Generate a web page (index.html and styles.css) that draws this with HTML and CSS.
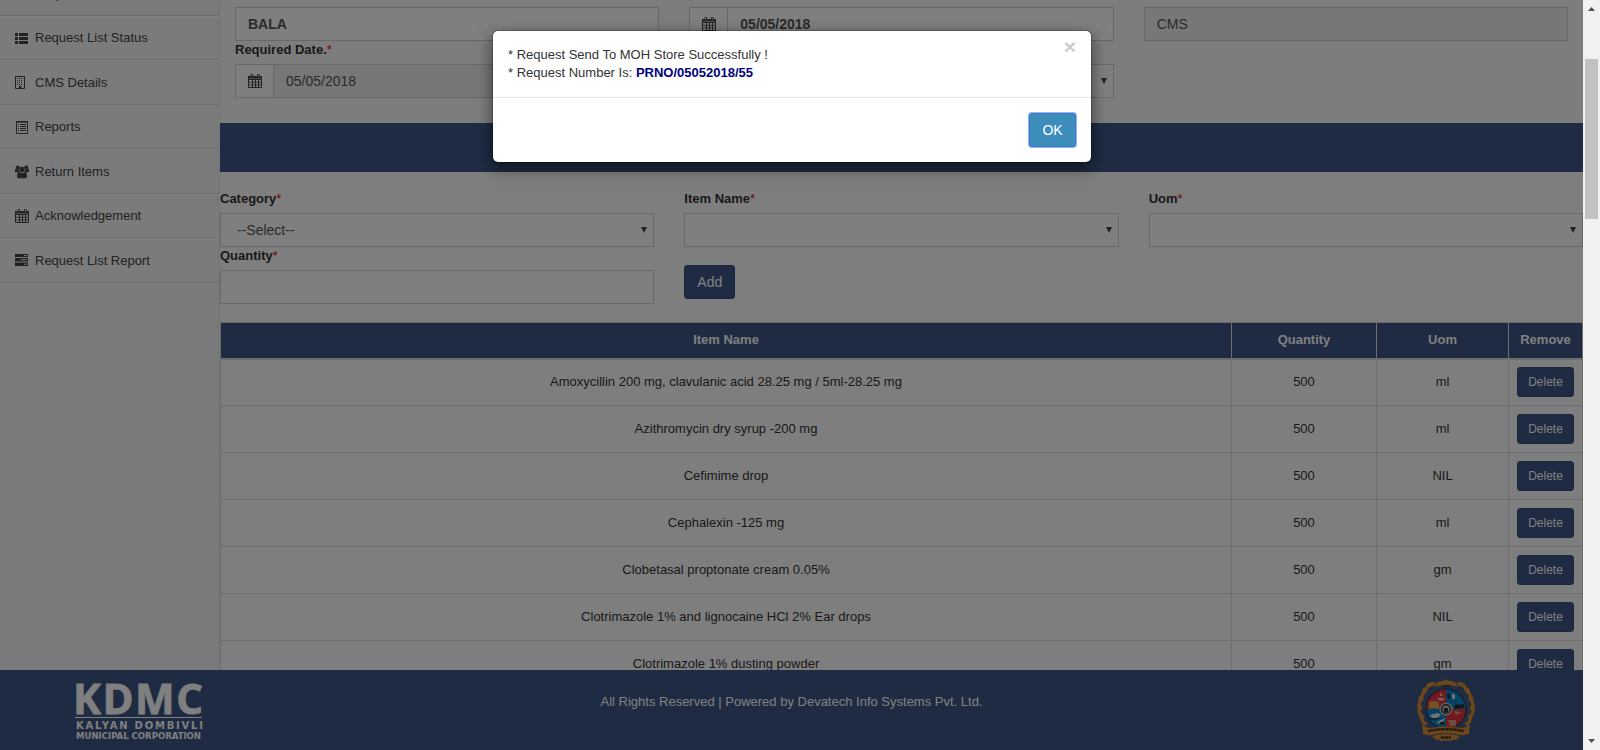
FILE: index.html
```html
<!DOCTYPE html>
<html lang="en">
<head>
<meta charset="utf-8">
<title>Request To MOH Store</title>
<link rel="stylesheet" href="styles.css">
</head>
<body>
<svg class="defs" aria-hidden="true">
  <symbol id="calendar" viewBox="0 0 14 14">
    <path fill="none" stroke="currentColor" d="M.5 2.5h13v11H.5zM.5 5.5h13M4.500 5v8M7.500 5v8M10.500 5v8"/>
    <path stroke="currentColor" stroke-width=".8" d="M.5 8.300h13M.5 10.900h13"/>
    <path fill="currentColor" d="M0 2h14v2.600H0zM2.500.2h2.600v3.300H2.500zM9 .2h2.600v3.300H9z"/>
    <path stroke="#eee" stroke-width=".8" d="M3.800 1v2M10.300 1v2"/>
  </symbol>
</svg>
<div class="window">
  <div class="page">
    <nav class="sidebar">
      <a class="item first">Request</a>
      <a class="item"><svg class="ico" viewBox="0 0 14 14"><path fill="currentColor" d="M0 1h3v3H0zM4 1h9v3H4zM0 5h3v3H0zM4 5h9v3H4zM0 9h3v3H0zM4 9h9v3H4z"/></svg>Request List Status</a>
      <a class="item"><svg class="ico" viewBox="0 0 14 14"><path fill="none" stroke="currentColor" d="M.5.500h9v12h-9z"/><path stroke="currentColor" stroke-dasharray="1 1" d="M2 2.500h6M2 4.500h6M2 6.500h6M2 8.500h6"/><path fill="currentColor" d="M4 10h2.400v3H4z"/></svg>CMS Details</a>
      <a class="item"><svg class="ico" viewBox="0 0 14 14"><path fill="none" stroke="currentColor" d="M1.500.500h11v12h-11z"/><path stroke="currentColor" d="M1 1.200h12"/><path stroke="currentColor" stroke-width="1" d="M3 3.500h1M5 3.500h6M3 5.500h1M5 5.500h6M3 7.500h1M5 7.500h6M3 9.500h1M5 9.500h6"/></svg>Reports</a>
      <a class="item"><svg class="ico" viewBox="0 0 14 14"><g fill="currentColor"><circle cx="2.800" cy="2.400" r="2"/><circle cx="11.200" cy="2.400" r="2"/><circle cx="7" cy="4.400" r="2.600"/><path d="M0 7V5q0-1.200 1-1.200 2 1 3 .6 0 1.800.8 2.800H1Q0 7.200 0 7zM14 7V5q0-1.200-1-1.200-2 1-3 .6 0 1.800-.8 2.800H13q1 0 1-.2zM2 11.500q0-4.500 2.200-4.500 2.800 1.800 5.600 0Q12 7 12 11.500q0 1.700-1.700 1.700H3.700Q2 13.200 2 11.500z"/></g></svg>Return Items</a>
      <a class="item"><svg class="ico"><use href="#calendar"/></svg>Acknowledgement</a>
      <a class="item"><svg class="ico up" viewBox="0 0 14 14"><path fill="currentColor" d="M0 1h13v3H0zM0 5h13v3.500H0zM0 9.500h13V13H0z"/><path stroke="#eee" d="M9 2.500h3M6 6.700h6M9 11.200h3"/></svg>Request List Report</a>
    </nav>
    <main class="content">
      <section class="request">
        <div class="field"><div class="control bold">BALA</div></div>
        <div class="field"><div class="group"><span class="addon"><svg class="ico"><use href="#calendar"/></svg></span><div class="control bold">05/05/2018</div></div></div>
        <div class="field"><div class="control readonly">CMS</div></div>
        <div class="field"><label>Required Date.<i>*</i></label><div class="group"><span class="addon"><svg class="ico"><use href="#calendar"/></svg></span><div class="control readonly">05/05/2018</div></div></div>
        <div class="field"><label></label><div class="control select"></div></div>
      </section>
      <div class="band"></div>
      <section class="entry">
        <div class="field"><label>Category<i>*</i></label><div class="control select">--Select--</div></div>
        <div class="field"><label>Item Name<i>*</i></label><div class="control select"></div></div>
        <div class="field"><label>Uom<i>*</i></label><div class="control select"></div></div>
        <div class="field"><label>Quantity<i>*</i></label><div class="control"></div></div>
        <div class="field"><button class="btn add">Add</button></div>
      </section>
      <table class="items">
        <colgroup><col><col class="c-qty"><col class="c-uom"><col class="c-del"></colgroup>
        <thead><tr><th>Item Name</th><th>Quantity</th><th>Uom</th><th>Remove</th></tr></thead>
        <tbody>
          <tr><td>Amoxycillin 200 mg, clavulanic acid 28.25 mg / 5ml-28.25 mg</td><td>500</td><td>ml</td><td><button class="btn small">Delete</button></td></tr>
          <tr><td>Azithromycin dry syrup -200 mg</td><td>500</td><td>ml</td><td><button class="btn small">Delete</button></td></tr>
          <tr><td>Cefimime drop</td><td>500</td><td>NIL</td><td><button class="btn small">Delete</button></td></tr>
          <tr><td>Cephalexin -125 mg</td><td>500</td><td>ml</td><td><button class="btn small">Delete</button></td></tr>
          <tr><td>Clobetasal proptonate cream 0.05%</td><td>500</td><td>gm</td><td><button class="btn small">Delete</button></td></tr>
          <tr><td>Clotrimazole 1% and lignocaine HCl 2% Ear drops</td><td>500</td><td>NIL</td><td><button class="btn small">Delete</button></td></tr>
          <tr><td>Clotrimazole 1% dusting powder</td><td>500</td><td>gm</td><td><button class="btn small">Delete</button></td></tr>
        </tbody>
      </table>
    </main>
  </div>
  <footer class="footer">
    <svg class="kdmc" viewBox="0 0 130 58">
      <g class="logo-text">
        <text class="logo-big" x="-2" y="31" textLength="130">KDMC</text>
        <path d="M0 34h127v1H0z"/>
        <text class="logo-mid" x="1" y="45.500" textLength="127">KALYAN DOMBIVLI</text>
        <text class="logo-low" x="1" y="55.500" textLength="125" lengthAdjust="spacingAndGlyphs">MUNICIPAL CORPORATION</text>
      </g>
    </svg>
    <p>All Rights Reserved | Powered by Devatech Info Systems Pvt. Ltd.</p>
    <svg class="seal" viewBox="0 0 60 64">
      <g fill="none" stroke="#d98f35">
        <path stroke-width="3" d="M19 5.500Q11 5 10 12q-5 3-4 9-4 4-3 9-1 5 3 8-1 6 4 9M41 5.500q8-.5 9 6.500 5 3 4 9 4 4 3 9 1 5-3 8 1 6-4 9"/>
        <path stroke-width="4" stroke-dasharray="5 4" d="M17 6Q8 8 8 15q-5 5-4 15 0 10 6 17M43 6q9 2 9 9 5 5 4 15 0 10-6 17"/>
      </g>
      <circle cx="30" cy="31" r="22.500" fill="none" stroke="#55658a"/>
      <circle cx="30" cy="31" r="20.500" fill="#26343f"/>
      <path fill="#e0323c" d="M30 31V11.500a19.500 19.500 0 0 0-19.500 19.500z"/>
      <path fill="#0b86c8" d="M30 31V11.500a19.500 19.500 0 0 1 19.500 19.500z"/>
      <path fill="#0b86c8" d="M30 31v19.500a19.500 19.500 0 0 1-19.500-19.500z"/>
      <path fill="#e0323c" d="M30 31v19.500a19.500 19.500 0 0 0 19.500-19.500z"/>
      <path fill="#e6a54b" d="M13 24l5-1 5 1v7l-5-1-5 1z"/>
      <path fill="#e8c8a8" d="M21 20h8l-2 2.500h-4zM25 14l1.500 4h-3z"/>
      <path fill="#dfe8ee" d="M36 15.500l3 1v5l-3-1zM14 37l8-2 3 2-4 3h-5zM21 44l8-4-2 5-5 1z"/>
      <path fill="#24313c" d="M31 15l3 1v5l-3-1zM38 28q2-3 5-1l5-1v4l-9 1zM13 40h10v1.500H14zM22 45l7-2-2 4z"/>
      <path fill="#d69b8b" d="M32 42h8v6h-6zM38 33l8 1-6 3z"/>
      <circle cx="30" cy="31" r="6.500" fill="#c4c4c4"/>
      <circle cx="30" cy="31" r="4.300" fill="none" stroke="#333" stroke-width="1.500"/><path fill="#333" d="M28 30h4v4h-4z"/>
      <path fill="#d98f35" d="M21 4l6-1 3-2 3 2 6 1 3 5-5-1q-7-3-14 0l-5 1zM6 47q5 4 12 2.500 12-2 24 0 7 1.500 12-2.500l-1 9q-6 2-11 .5-12-2.500-24 0-5 1.500-11-.5zM16 58q14-4 28 0l-4 4q-3-1-5 1-5-1-10 0-2-2-5-1z"/>
      <path stroke="#3d2a1a" stroke-width="2.500" stroke-dasharray="2 .6" fill="none" d="M12 53q18-3.500 36 0M25 59.500h10"/>
      <path stroke="#3d2a1a" d="M26 8.500h8"/>
    </svg>
  </footer>
  <div class="backdrop"></div>
  <div class="modal">
    <div class="modal-body"><span class="close">×</span>* Request Send To MOH Store Successfully !<br>* Request Number Is: <b>PRNO/05052018/55</b></div>
    <div class="modal-foot"><button class="ok">OK</button></div>
  </div>
</div>
<div class="scrollbar">
  <svg class="arrow" viewBox="0 0 7 4"><path fill="#505050" d="M0 4h7L3.500 0z"/></svg>
  <div class="thumb"></div>
  <svg class="arrow down" viewBox="0 0 7 4"><path fill="#505050" d="M0 0h7L3.500 4z"/></svg>
</div>
</body>
</html>
```
FILE: styles.css
```css
* { box-sizing: border-box; }
body {
  margin: 0; height: 750px; display: flex; overflow: hidden;
  font: 13px/1.42857 "Liberation Sans", Arial, sans-serif; color: #333;
}
.defs { position: absolute; width: 0; height: 0; }
.window { position: relative; width: 1583px; height: 750px; display: flex; flex-direction: column; overflow: hidden; }
.page { display: flex; height: 670px; overflow: hidden; }

.sidebar { width: 220px; flex: none; background: #f6f6f6; box-shadow: inset -2px 0 3px -1px #e6e6e6; }
.item {
  display: flex; align-items: center; height: 44.450px; padding: 2px 0 0 15px;
  border-bottom: 1px solid #dcdcdc; box-shadow: inset 0 1px 0 #fff; color: #444;
}
.item.first { height: 16px; padding: 0 0 11px 35px; align-items: flex-end; box-shadow: none; overflow: hidden; }
.ico { width: 14px; height: 14px; margin-right: 6px; color: #444; flex: none; }
.ico.up { margin-top: -2px; }

.content { flex: 1; background: #fdfdfd; }
.request {
  display: grid; grid-template-columns: repeat(3, 1fr); column-gap: 30px;
  padding: 7px 15px 20px; height: 118px; background: #fafafa;
}
.entry {
  display: grid; grid-template-columns: repeat(3, 1fr); column-gap: 30px;
  padding-top: 17.500px; align-content: start; height: 150px;
}
.band { height: 49px; margin-top: 5px; background: #3c5684; }
label { display: block; margin-bottom: 5px; font-weight: 700; height: 18px; }
label i { color: #f00; font-style: normal; font-weight: 400; }
.control {
  height: 34px; border: 1px solid #d0d2d6; background: #fff; padding: 6px 12px;
  font-size: 14px; line-height: 20px; color: #555;
}
.bold { font-weight: 700; }
.readonly { background: #eee; }
.group { display: flex; }
.group .control { flex: 1; }
.addon {
  width: 38px; height: 34px; border: 1px solid #d0d2d6; border-right: 0;
  display: flex; align-items: center; justify-content: center; background: #fff;
}
.addon .ico { margin: 0; }
.select { display: flex; justify-content: space-between; padding: 6px 6px 6px 16px; }
.select::after {
  content: ""; margin: 7px 0 0 auto; width: 0; height: 0;
  border: 3px solid transparent; border-top: 6px solid #444; border-bottom: 0;
}
.btn { background: #3c5684; color: #fff; border: 1px solid #38507c; border-radius: 3px; font: 14px "Liberation Sans", Arial, sans-serif; padding: 0; }
.add { display: block; width: 51px; height: 34px; margin-top: 18px; }
.small { display: block; width: 57px; height: 30px; font-size: 12px; margin: 0 auto; }

.items { width: 1363px; table-layout: fixed; border-collapse: collapse; text-align: center; color: #333; }
.c-qty { width: 145px; }
.c-uom { width: 132px; }
.c-del { width: 74px; }
.items th { height: 36px; padding: 1px 0 0; background: #3c5684; color: #fff; border: 1px solid #ddd; border-bottom: 2px solid #ddd; }
.items td { height: 47px; padding: 0; border: 1px solid #ddd; }

.footer {
  height: 80px; flex: none; background: #3c5684; color: #fff;
  display: grid; grid-template-columns: 220px 1fr 220px; align-items: start;
}
.footer p { margin: 23px 0 0; text-align: center; }
.kdmc { width: 130px; height: 58px; margin: 13px 0 0 75px; overflow: visible; }
.logo-text { fill: #fff; font-family: "DejaVu Sans", sans-serif; font-weight: 700; }
.logo-big { font-family: "Open Sans", sans-serif; font-size: 42px; stroke: #fff; stroke-width: .8px; }
.logo-mid { font-size: 10px; }
.logo-low { font-size: 8.500px; }
.seal { width: 60px; height: 64px; margin: 8px 0 0 53px; }

.backdrop { position: absolute; inset: 0; background: rgba(0, 0, 0, .5); }
.modal {
  position: absolute; top: 30px; left: 492px; width: 600px; background: #fff; background-clip: padding-box;
  border: 1px solid rgba(0, 0, 0, .2); border-radius: 6px; box-shadow: 0 5px 15px rgba(0, 0, 0, .5);
}
.modal-body { padding: 15px; height: 66px; line-height: 18px; }
.modal-body b { color: #000080; }
.close { float: right; margin-top: -10px; font-size: 21px; font-weight: 700; line-height: 21px; color: #ccc; }
.modal-foot { border-top: 1px solid #e5e5e5; padding: 15px; height: 65px; display: flex; justify-content: flex-end; }
.ok {
  width: 47px; height: 34px; padding: 0; background: #3c8dbc; color: #fff; border: 1px solid #3f7cc4;
  border-radius: 3px; font: 14px "Liberation Sans", Arial, sans-serif; box-shadow: 0 0 0 1px #8fb2f5;
}

.scrollbar { width: 17px; height: 750px; background: #f1f1f1; display: flex; flex-direction: column; align-items: center; padding: 7px 0; }
.arrow { width: 7px; height: 4px; }
.thumb { width: 13px; height: 160px; margin-top: 48px; background: #c1c1c1; }
.down { margin-top: auto; }
```
